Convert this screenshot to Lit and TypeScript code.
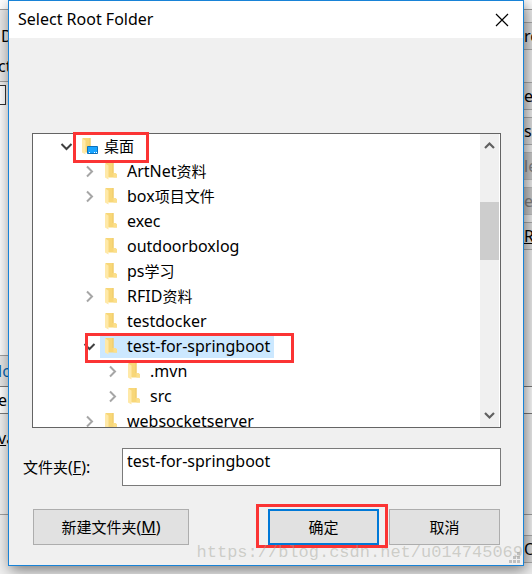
import { LitElement, html, css, svg, nothing } from "lit";
import { customElement } from "lit/decorators.js";
import { classMap } from "lit/directives/class-map.js";

interface TreeNode {
  name: string;
  level: number;
  state?: "open" | "closed";
  desktop?: boolean;
  selected?: boolean;
}

const NODES: TreeNode[] = [
  { name: "桌面", level: 0, state: "open", desktop: true },
  { name: "ArtNet资料", level: 1, state: "closed" },
  { name: "box项目文件", level: 1, state: "closed" },
  { name: "exec", level: 1 },
  { name: "outdoorboxlog", level: 1 },
  { name: "ps学习", level: 1 },
  { name: "RFID资料", level: 1, state: "closed" },
  { name: "testdocker", level: 1 },
  { name: "test-for-springboot", level: 1, state: "open", selected: true },
  { name: ".mvn", level: 2, state: "closed" },
  { name: "src", level: 2, state: "closed" },
  { name: "websocketserver", level: 1, state: "closed" },
];

const fontStack = css`"Noto Sans", "Noto Sans CJK SC", sans-serif`;

/* Chinese runs are set one pixel smaller than the Latin text beside them. */
const mixed = (text: string) =>
  text
    .split(/([\u4e00-\u9fff]+)/)
    .filter(Boolean)
    .map((part) => (/[\u4e00-\u9fff]/.test(part) ? html`<span class="cjk">${part}</span>` : part));

/* One line of the folder tree. */
@customElement("tree-row")
export class TreeRow extends LitElement {
  static properties = { node: { attribute: false } };
  declare node: TreeNode;

  static styles = css`
    :host { display: flex; height: 25px; align-items: center; flex: none; }
    .indent { width: 23px; flex: none; }
    .toggle { width: 21px; height: 25px; flex: none; display: flex; align-items: center; justify-content: center; }
    .item { display: flex; align-items: center; height: 23px; padding: 0 4px 0 2px; }
    .item.selected { background: #cce8ff; }
    .icon { width: 25px; height: 17px; flex: none; }
    .name { white-space: nowrap; line-height: 23px; }
    .cjk { font-size: 15px; }
    svg { display: block; }
  `;

  private toggle() {
    if (this.node.state === "open")
      return html`<svg width="13" height="13" viewBox="0 0 13 13" fill="none" stroke="#404040" stroke-width="2"><path d="M1.5 4 6.5 9 11.5 4"/></svg>`;
    if (this.node.state === "closed")
      return html`<svg width="13" height="13" viewBox="0 0 13 13" fill="none" stroke="#a6a6a6" stroke-width="2"><path d="M4 1.5 9 6.5 4 11.5"/></svg>`;
    return nothing;
  }

  private icon() {
    return html`<svg class="icon" viewBox="0 0 25 17">
      <path d="M3.500 0H11.500V10H13.500L15 11.500V14.500H7L3.500 13z" fill="#f8d778"/>
      <path d="M10.500 0h1v10h-1z" fill="#edc968"/>
      <path d="M11.500 10h2l1.500 1.500v3h-3.500z" fill="#fbdf8c"/>
      <path d="M3 .5 6.500 2.500V16.500L3 14.500z" fill="#ffe9a8"/>
      ${this.node.desktop
        ? svg`<path d="M8.500 8.500h10v7h-10z" fill="#18a4ff" stroke="#0a70bc"/><path d="M10 14.500h1M15 14.500h1M17 14.500h1" stroke="#fff"/>`
        : nothing}
    </svg>`;
  }

  render() {
    const n = this.node;
    return html`
      ${Array.from({ length: n.level }, () => html`<span class="indent"></span>`)}
      <span class="toggle">${this.toggle()}</span>
      <span class="item ${classMap({ selected: !!n.selected })}">${this.icon()}<span class="name">${mixed(n.name)}</span></span>
    `;
  }
}

/* The window that lies behind the dialog; only its margins stay visible. */
@customElement("back-window")
export class BackWindow extends LitElement {
  static styles = css`
    :host { display: flex; justify-content: space-between; background: #f0f0f0; overflow: hidden; color: #000; }
    .strip { width: 8px; display: flex; flex-direction: column; overflow: hidden; }
    .strip > * { box-sizing: border-box; flex: none; white-space: nowrap; overflow: hidden; display: flex; align-items: center; }
    .left { text-indent: -2px; }
    .right > * { width: 24px; }
    .end { flex: 1 1 0; }
    .btn { height: 28px; background: #e1e1e1; border: solid #adadad; border-width: 1px 0; }
    .off { background: #cccccc; border-color: #bfbfbf; color: #838383; }
    .strip > .top { height: 9px; background: #fff; }
    .strip > .tabs { height: 73px; border: solid #a0a0a0; border-width: 1px 0; background: #e8e8e8; flex-direction: column; align-items: flex-start; padding-top: 11px; line-height: 30px; }
    .tabs .first { text-indent: 1px; }
    .strip > .box { height: 20px; width: 6px; margin-top: 3px; border: 1px solid #333; border-left: 0; background: #fff; }
    .blank { height: 250px; background: #fcfcfc; }
    .head { height: 31px; background: #e6e6e6; border-top: 1px solid #a0a0a0; color: #0a64ad; }
    .field { height: 28px; background: #fff; border: solid #7a7a7a; border-width: 1px 0; }
    .note { height: 47px; }
    .rule { height: 54px; border-bottom: 1px solid #a0a0a0; }
    .g7 { height: 7px; } .g32 { height: 32px; } .g136 { height: 136px; } .g100 { height: 100px; }
    .line { height: 13px; border-top: 1px solid #a0a0a0; }
    .tall { height: 21px; border-top: 1px solid #a0a0a0; background: #f7f7f7; }
  `;

  render() {
    return html`
      <div class="strip left">
        <div class="top"></div>
        <div class="tabs"><span class="first">D</span><span>ct</span></div>
        <div class="box"></div>
        <div class="blank"></div>
        <div class="head">lo</div>
        <div class="field">el</div>
        <div class="note"><span><u>v</u>a</span></div>
        <div class="rule"></div>
        <div class="end"></div>
      </div>
      <div class="strip right">
        <div class="top"></div>
        <div class="line"></div>
        <div class="btn">ro</div>
        <div class="g32"></div>
        <div class="btn">e</div>
        <div class="g7"></div>
        <div class="btn">s</div>
        <div class="g7"></div>
        <div class="btn off">le</div>
        <div class="g7"></div>
        <div class="btn off">e</div>
        <div class="g7"></div>
        <div class="btn"><u>R</u>e</div>
        <div class="g136"></div>
        <div class="field"></div>
        <div class="g100"></div>
        <div class="tall"></div>
        <div class="btn">O</div>
        <div class="end"></div>
      </div>
    `;
  }
}

@customElement("app-root")
export class AppRoot extends LitElement {
  static styles = css`
    :host { display: block; position: relative; font: 16px ${fontStack}; color: #000; min-height: 100vh; overflow: hidden; }
    back-window { position: absolute; inset: 0; }
    .dialog { position: relative; margin: 0 8px 8px; border: 1px solid #1883d7; background: #f0f0f0; box-shadow: 2px 4px 14px rgba(0, 0, 0, 0.5); }
    .title { display: flex; align-items: center; justify-content: space-between; height: 37px; background: #fff; padding: 0 14px 0 9px; }
    .title h1 { font: inherit; line-height: 20px; margin: 0; padding-bottom: 2px; }
    .close { border: 0; background: none; padding: 0; width: 14px; height: 14px; }
    svg { display: block; }
    .cjk { font-size: 15px; }
    .content { padding: 95px 22px 20px 23px; }
    .pick { position: relative; }
    .tree { display: flex; border: 1px solid #646464; background: #fff; height: 293px; overflow: hidden; }
    .rows { flex: 1; padding-left: 23px; overflow: hidden; }
    .bar { width: 19px; margin-right: 1px; background: #f0f0f0; display: flex; flex-direction: column; align-items: center; }
    .arrow { height: 23px; display: flex; align-items: center; flex: none; }
    .track { flex: 1; width: 100%; display: grid; grid-template-rows: 45fr 58fr 144fr; }
    .thumb { grid-row: 2; background: #cdcdcd; }
    .folder { display: flex; align-items: center; margin: 20px 0 23px -9px; }
    .folder label { width: 99px; flex: none; }
    .folder input { flex: 1; min-width: 0; box-sizing: border-box; height: 38px; border: 1px solid #7a7a7a; background: #fff; padding: 0 4px 12px; font: inherit; color: inherit; outline: 0; }
    .buttons { display: flex; gap: 10px; padding: 0 1px; }
    .buttons button { box-sizing: border-box; height: 36px; width: 111px; padding: 0; border: 1px solid #adadad; background: #e1e1e1; font: inherit; color: inherit; }
    .buttons .new { width: 156px; margin-right: auto; }
    .buttons .ok { width: 100%; border: 2px solid #0078d7; }
    .okwrap { position: relative; width: 111px; }
    .mark { position: absolute; border: 3px solid #fb3434; pointer-events: none; }
    .mark.desktop { left: 41px; top: -1px; width: 70px; height: 25px; }
    .mark.project { left: 53px; top: 200px; width: 203px; height: 24px; }
    .mark.confirm { inset: -5px -9px -3px -12px; }
    .grip { position: absolute; right: 3px; bottom: 2px; }
    .water { position: absolute; right: 0; bottom: 0; font: 17px/24px "Liberation Mono", monospace; color: rgba(160, 160, 150, 0.45); white-space: nowrap; pointer-events: none; }
  `;

  render() {
    return html`
      <back-window aria-hidden="true"></back-window>
      <section class="dialog" role="dialog" aria-labelledby="title">
        <header class="title">
          <h1 id="title">Select Root Folder</h1>
          <button class="close" aria-label="Close">
            <svg width="14" height="14" viewBox="0 0 14 14" stroke="#000" stroke-width="1.200"><path d="M1 1 13 13M13 1 1 13"/></svg>
          </button>
        </header>
        <div class="content">
          <div class="pick">
            <div class="tree">
              <div class="rows">${NODES.map((n) => html`<tree-row .node=${n}></tree-row>`)}</div>
              <div class="bar">
                <span class="arrow"><svg width="11" height="9" viewBox="0 0 11 9" fill="none" stroke="#606060" stroke-width="2.200"><path d="M1 7 5.500 2.500 10 7"/></svg></span>
                <div class="track"><div class="thumb"></div></div>
                <span class="arrow"><svg width="11" height="9" viewBox="0 0 11 9" fill="none" stroke="#606060" stroke-width="2.200"><path d="M1 2 5.500 6.500 10 2"/></svg></span>
              </div>
            </div>
            <span class="mark desktop"></span>
            <span class="mark project"></span>
          </div>
          <div class="folder">
            <label for="folder">${mixed("文件夹")}(<u>F</u>):</label>
            <input id="folder" type="text" value="test-for-springboot" />
          </div>
          <div class="buttons">
            <button class="new">${mixed("新建文件夹")}(<u>M</u>)</button>
            <div class="okwrap"><button class="ok">${mixed("确定")}</button><span class="mark confirm"></span></div>
            <button>${mixed("取消")}</button>
          </div>
        </div>
        <svg class="grip" width="11" height="11" viewBox="0 0 11 11" fill="#bfbfbf"><path d="M8 0h3v3H8zM4 4h3v3H4zM8 4h3v3H8zM0 8h3v3H0zM4 8h3v3H4zM8 8h3v3H8z"/></svg>
        <span class="water">https://blog.csdn.net/u014745069</span>
      </section>
    `;
  }
}
